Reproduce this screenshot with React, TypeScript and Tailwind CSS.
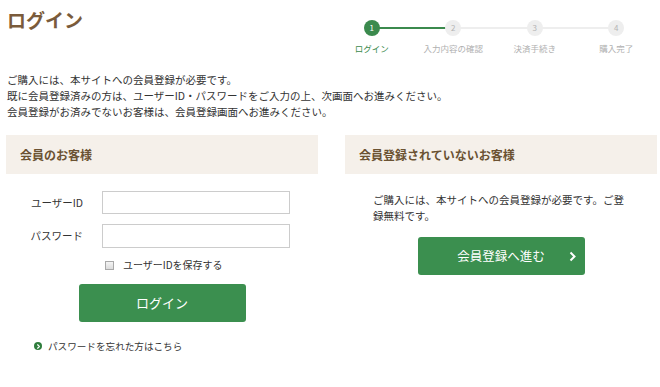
import { ChevronRight } from "lucide-react";

const font = { fontFamily: '"Noto Sans CJK JP", "Noto Sans", sans-serif' };

const steps = ["ログイン", "入力内容の確認", "決済手続き", "購入完了"];

function Stepper() {
  return (
    <div className="mr-[3px] grid w-[326px] grid-cols-4 pt-[20px]">
      {steps.map((label, i) => (
        <div key={label} className="relative flex flex-col items-center">
          {i < steps.length - 1 && (
            <div
              className={
                i === 0
                  ? "absolute left-1/2 top-[7px] h-[2px] w-full bg-[#3b8a4d]"
                  : "absolute left-1/2 top-[7px] h-[2px] w-full bg-[#eeeeee]"
              }
            />
          )}
          <div
            className={
              i === 0
                ? "relative z-10 flex h-[16px] w-[16px] items-center justify-center rounded-full bg-[#3b8a4d] text-[8px] leading-none text-white"
                : "relative z-10 flex h-[16px] w-[16px] items-center justify-center rounded-full bg-[#eeeeee] text-[8px] leading-none text-[#b4b4b4]"
            }
          >
            {i + 1}
          </div>
          <p
            className={
              i === 0
                ? "mt-[7px] text-[8.5px] leading-[10px] text-[#3b8a4d]"
                : "mt-[7px] text-[8.5px] leading-[10px] text-[#b0b0b0]"
            }
          >
            {label}
          </p>
        </div>
      ))}
    </div>
  );
}

function PanelHeader({ title }: { title: string }) {
  return (
    <div className="flex h-[39px] items-center bg-[#f5f0ea] px-[14px]">
      <h2 className="text-[12px] font-bold text-[#6b5232]">{title}</h2>
    </div>
  );
}

function MemberPanel() {
  return (
    <div className="w-[312px]">
      <PanelHeader title="会員のお客様" />
      <div className="mt-[17px] flex items-center">
        <label className="w-[77px] text-right text-[10.5px] text-[#333]">ユーザーID</label>
        <input className="ml-[19px] h-[23px] w-[188px] border border-[#cccccc] bg-white" />
      </div>
      <div className="mt-[10px] flex items-center">
        <label className="w-[77px] text-right text-[10.5px] text-[#333]">パスワード</label>
        <input
          type="password"
          className="ml-[19px] h-[24px] w-[188px] border border-[#cccccc] bg-white"
        />
      </div>
      <label className="ml-[99px] mt-[10px] flex h-[14px] items-center gap-[9px]">
        <span className="h-[9px] w-[9px] border border-[#a9a9a9] bg-gradient-to-b from-[#f4f4f4] to-[#dcdcdc]" />
        <span className="text-[10px] leading-[14px] text-[#333]">ユーザーIDを保存する</span>
      </label>
      <button
        type="button"
        className="mx-auto mt-[12px] flex h-[38px] w-[167px] items-center justify-center rounded-[3px] bg-[#3b8f4f] text-[13px] text-white"
      >
        ログイン
      </button>
      <a className="ml-[28px] mt-[17px] flex items-center gap-[6px] text-[9.6px] leading-[14px] text-[#333]">
        <span className="flex h-[8px] w-[8px] items-center justify-center rounded-full bg-[#2f7d3d]">
          <ChevronRight size={7} strokeWidth={4} className="text-white" />
        </span>
        パスワードを忘れた方はこちら
      </a>
    </div>
  );
}

function GuestPanel() {
  return (
    <div className="w-[312px]">
      <PanelHeader title="会員登録されていないお客様" />
      <p className="mt-[18px] px-[28px] text-[10.5px] leading-[16px] text-[#333]">
        ご購入には、本サイトへの会員登録が必要です。ご登録無料です。
      </p>
      <button
        type="button"
        className="relative mx-auto mt-[13px] flex h-[38px] w-[167px] items-center justify-center rounded-[3px] bg-[#3b8f4f] text-[12.5px] text-white"
      >
        会員登録へ進む
        <svg
          width="7"
          height="11"
          viewBox="0 0 7 11"
          className="absolute right-[9px] top-[14px]"
        >
          <polyline
            points="1.5,1.5 5.5,5.5 1.5,9.5"
            fill="none"
            stroke="white"
            strokeWidth="2"
          />
        </svg>
      </button>
    </div>
  );
}

export default function App() {
  return (
    <div className="h-[387px] w-[660px] overflow-hidden bg-white" style={font}>
      <div className="flex items-start justify-between">
        <h1 className="pl-[7px] pt-[8px] text-[19px] font-bold leading-[24px] text-[#7a5b3b]">
          ログイン
        </h1>
        <Stepper />
      </div>
      <div className="mt-[19px] pl-[7px] text-[10.5px] leading-[16px] text-[#333]">
        <p>ご購入には、本サイトへの会員登録が必要です。</p>
        <p>既に会員登録済みの方は、ユーザーID・パスワードをご入力の上、次画面へお進みください。</p>
        <p>会員登録がお済みでないお客様は、会員登録画面へお進みください。</p>
      </div>
      <div className="ml-[6px] mt-[15px] flex gap-[27px]">
        <MemberPanel />
        <GuestPanel />
      </div>
    </div>
  );
}
